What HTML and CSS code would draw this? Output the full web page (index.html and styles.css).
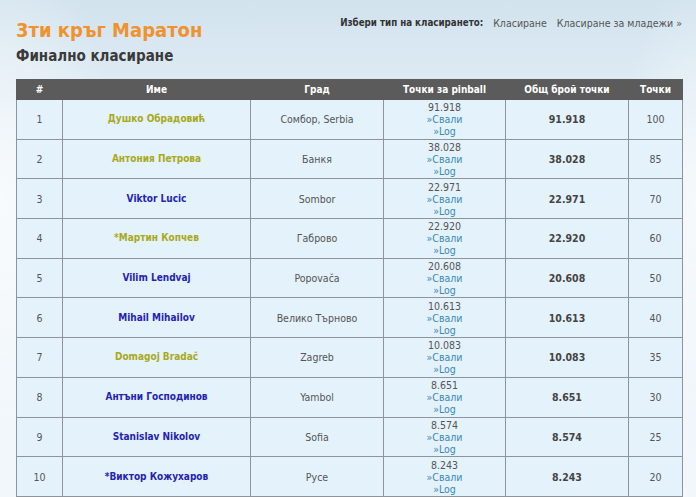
FILE: index.html
```html
<!DOCTYPE html>
<html lang="bg">
<head>
<meta charset="utf-8">
<title>3ти кръг Маратон</title>
<link rel="stylesheet" href="styles.css">
</head>
<body>
<div class="page">
  <div class="top">
    <div class="titles">
      <h1 class="title">3ти кръг Маратон</h1>
      <h2 class="subtitle">Финално класиране</h2>
    </div>
    <div class="chooser">
      <span class="chooser-label">Избери тип на класирането:</span>
      <a class="chooser-link" href="#">Класиране</a>
      <a class="chooser-link" href="#">Класиране за младежи »</a>
    </div>
  </div>
  <table class="ranking">
    <colgroup>
      <col class="c-pos"><col class="c-name"><col class="c-city"><col class="c-pin"><col class="c-total"><col class="c-pts">
    </colgroup>
    <thead>
      <tr><th>#</th><th>Име</th><th>Град</th><th>Точки за pinball</th><th>Общ брой точки</th><th>Точки</th></tr>
    </thead>
    <tbody>
      <tr><td>1</td><td class="name olive">Душко Обрадовић</td><td>Сомбор, Serbia</td><td class="pin">91.918<br><a href="#">»Свали</a><br><a href="#">»Log</a></td><td class="total">91.918</td><td>100</td></tr>
      <tr><td>2</td><td class="name olive">Антония Петрова</td><td>Банкя</td><td class="pin">38.028<br><a href="#">»Свали</a><br><a href="#">»Log</a></td><td class="total">38.028</td><td>85</td></tr>
      <tr><td>3</td><td class="name blue">Viktor Lucic</td><td>Sombor</td><td class="pin">22.971<br><a href="#">»Свали</a><br><a href="#">»Log</a></td><td class="total">22.971</td><td>70</td></tr>
      <tr><td>4</td><td class="name olive">*Мартин Копчев</td><td>Габрово</td><td class="pin">22.920<br><a href="#">»Свали</a><br><a href="#">»Log</a></td><td class="total">22.920</td><td>60</td></tr>
      <tr><td>5</td><td class="name blue">Vilim Lendvaj</td><td>Popovača</td><td class="pin">20.608<br><a href="#">»Свали</a><br><a href="#">»Log</a></td><td class="total">20.608</td><td>50</td></tr>
      <tr><td>6</td><td class="name blue">Mihail Mihailov</td><td>Велико Търново</td><td class="pin">10.613<br><a href="#">»Свали</a><br><a href="#">»Log</a></td><td class="total">10.613</td><td>40</td></tr>
      <tr><td>7</td><td class="name olive">Domagoj Bradač</td><td>Zagreb</td><td class="pin">10.083<br><a href="#">»Свали</a><br><a href="#">»Log</a></td><td class="total">10.083</td><td>35</td></tr>
      <tr><td>8</td><td class="name blue">Антъни Господинов</td><td>Yambol</td><td class="pin">8.651<br><a href="#">»Свали</a><br><a href="#">»Log</a></td><td class="total">8.651</td><td>30</td></tr>
      <tr><td>9</td><td class="name blue">Stanislav Nikolov</td><td>Sofia</td><td class="pin">8.574<br><a href="#">»Свали</a><br><a href="#">»Log</a></td><td class="total">8.574</td><td>25</td></tr>
      <tr><td>10</td><td class="name blue">*Виктор Кожухаров</td><td>Русе</td><td class="pin">8.243<br><a href="#">»Свали</a><br><a href="#">»Log</a></td><td class="total">8.243</td><td>20</td></tr>
    </tbody>
  </table>
</div>
</body>
</html>
```

FILE: styles.css
```css
html, body {
  margin: 0;
  padding: 0;
}
body {
  font-family: "DejaVu Sans Condensed", "DejaVu Sans", Verdana, sans-serif;
  font-stretch: condensed;
  font-size: 11px;
  color: #555;
  background:
    radial-gradient(ellipse 120px 260px at 0px 200px, rgba(255,255,255,0.7), rgba(255,255,255,0) 100%),
    radial-gradient(ellipse 80px 220px at 696px 200px, rgba(255,255,255,0.6), rgba(255,255,255,0) 100%),
    linear-gradient(180deg, #d2e3ee 0px, #e3eef6 120px, #eef5fa 300px, #f1f7fb 497px);
  height: 497px;
  overflow: hidden;
}
.page {
  padding: 0 14px 0 16px;
}
.top {
  display: flex;
  justify-content: space-between;
  align-items: flex-start;
  height: 79px;
}
.title {
  margin: 18px 0 0;
  font-size: 20px;
  line-height: 24px;
  font-weight: bold;
  color: #f0922e;
}
.subtitle {
  margin: 4px 0 0;
  font-size: 15px;
  line-height: 20px;
  font-weight: bold;
  color: #3a3a3a;
}
.chooser {
  margin-top: 16px;
  display: flex;
  gap: 10px;
  font-size: 10.5px;
  line-height: 14px;
}
.chooser-label {
  font-weight: bold;
  font-size: 9.7px;
  color: #333;
}
.chooser-link {
  color: #555;
  text-decoration: none;
}
.ranking {
  width: 666px;
  border-collapse: collapse;
  table-layout: fixed;
}
.c-pos { width: 46px; }
.c-name { width: 188px; }
.c-city { width: 133px; }
.c-pin { width: 122px; }
.c-total { width: 123px; }
.c-pts { width: 54px; }
.ranking th {
  background: #5b5b5b;
  color: #fff;
  font-weight: bold;
  font-size: 10px;
  height: 19px;
  padding: 0;
  border: 1px solid #5b5b5b;
  text-align: center;
}
.ranking td {
  background: #e4f2fb;
  border: 1px solid #8e9499;
  text-align: center;
  vertical-align: middle;
  padding: 1px 2px;
  line-height: 12px;
  height: 36.7px;
  font-size: 10.5px;
  color: #555;
}
.ranking td.name {
  font-weight: bold;
  font-size: 10px;
}
.olive { color: #a9a91c !important; }
.blue { color: #2424b0 !important; }
.ranking td.pin a {
  color: #3b8ab5;
  text-decoration: none;
}
.ranking td.total {
  font-weight: bold;
  color: #444;
}
```
